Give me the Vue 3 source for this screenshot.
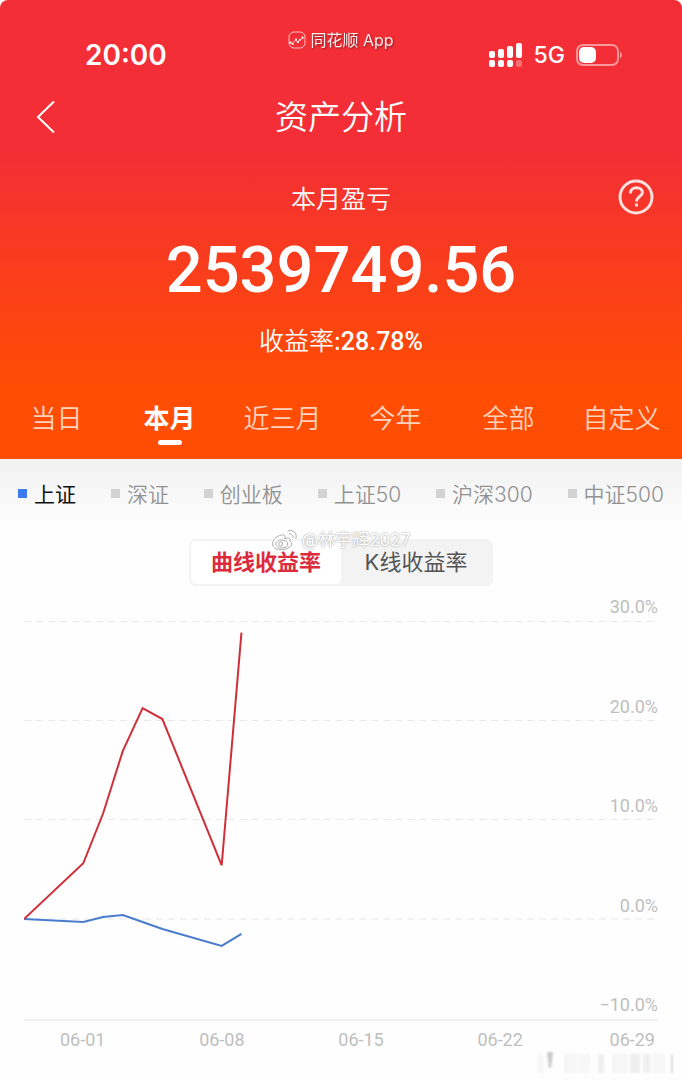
<template>
    <div class="page">
        <header class="hero">
            <div class="status-bar">
                <span class="clock">20:00</span>
                <div class="app-mark">
                    <svg class="app-icon" viewBox="0 0 18 18">
                        <rect x="1" y="1" width="16" height="16" rx="5" />
                        <path d="M1 11.5L4 12.5L8 9L9.500 11L12 8.500L15.500 7" />
                        <path class="dots" d="M1.500 11.500h2M4 13h1.500M7 8.500h2M9 11h2M11 9h1.500M13.500 6.500h2" />
                    </svg>
                    <span>同花顺 App</span>
                </div>
                <div class="status-right">
                    <svg class="signal" viewBox="0 0 34 24">
                        <rect x="0" y="8" width="6" height="7" rx="2" />
                        <rect x="9" y="6" width="6" height="9" rx="2" />
                        <rect x="18" y="3" width="6" height="12" rx="2" />
                        <rect x="27" y="0" width="6" height="15" rx="2" />
                        <rect x="0" y="17" width="6" height="7" rx="2" />
                        <rect x="9" y="17" width="6" height="7" rx="2" />
                        <rect x="18" y="17" width="6" height="7" rx="2" />
                        <rect class="weak" x="27" y="17" width="6" height="7" rx="2" />
                    </svg>
                    <span class="network">5G</span>
                    <svg class="battery" viewBox="0 0 46 22">
                        <rect class="shell" x="1" y="1" width="41" height="20" rx="6" />
                        <rect x="3" y="3" width="17" height="16" rx="5" />
                        <path class="tip" d="M44 7.500Q46 9 46 11T44 14.500Z" />
                    </svg>
                </div>
            </div>

            <nav class="nav-bar">
                <button class="icon-btn" aria-label="返回">
                    <svg class="back-icon" viewBox="0 0 20 34">
                        <path d="M18 1.500L2 17L18 32.500" />
                    </svg>
                </button>
                <h1>资产分析</h1>
            </nav>

            <section class="summary">
                <div class="summary-title">
                    <span>本月盈亏</span>
                    <button class="icon-btn help-btn" aria-label="帮助">
                        <svg class="help-icon" viewBox="0 0 36 36">
                            <circle cx="18" cy="18" r="16" />
                            <path d="M12.500 14.500V13.500C12.500 7 24.500 7 24.500 13.500C24.500 17 18.500 18 18.500 22.500M18.500 24.500V27.500" />
                        </svg>
                    </button>
                </div>
                <strong class="amount">2539749.56</strong>
                <p class="rate">收益率:<b>28.78%</b></p>
            </section>

            <div class="period-tabs">
                <button v-for="p in periods" :key="p" :class="{ active: p === period }" @click="period = p">{{ p }}</button>
            </div>
        </header>

        <main>
            <div class="index-row">
                <button v-for="i in indexes" :key="i" :class="{ active: i === index }" @click="index = i">{{ i }}</button>
            </div>

            <div class="mode-wrap">
                <div class="mode-switch">
                    <button v-for="m in modes" :key="m" :class="{ active: m === mode }" @click="mode = m">{{ m }}</button>
                </div>
                <div class="author-mark">
                    <svg class="weibo-icon" viewBox="0 0 26 22">
                        <path d="M10 6C4 7 0 12 1 16C2 20 8 22 14 20C20 18 22 14 18 12C19 9 17 8 13 10C14 7 13 5 10 6Z" />
                        <ellipse cx="10" cy="15" rx="6" ry="4" />
                        <circle cx="9" cy="15" r="2" />
                        <path d="M16 2C21 0 26 4 24 10M17 5C20 4 22 7 21 9" />
                    </svg>
                    <span>@林宇辉2027</span>
                </div>
            </div>

            <section class="chart">
                <div class="plot">
                    <svg class="lines" viewBox="0 0 635 400" preserveAspectRatio="none">
                        <line v-for="y in gridLines" :key="y" class="grid" x1="0" x2="635" :y1="y" :y2="y" />
                        <line class="axis" x1="0" x2="635" y1="399" y2="399" />
                        <polyline class="index-line" :points="toPoints(indexData)" />
                        <polyline class="profit-line" :points="toPoints(profitData)" />
                    </svg>
                    <ul class="y-labels">
                        <li v-for="l in yLabels" :key="l">{{ l }}</li>
                    </ul>
                </div>
                <div class="x-labels">
                    <span v-for="d in dates" :key="d">{{ d }}</span>
                </div>
            </section>
        </main>

        <svg class="corner-mark" viewBox="0 0 150 32" aria-hidden="true">
            <rect v-for="s in smudges" :key="s[0]" :x="s[0]" y="6" :width="s[1]" height="19" :fill-opacity="s[2]" />
            <path d="M15 4H21L19 20H17Z" fill-opacity="0.400" />
        </svg>
    </div>
</template>

<script setup>
import { ref } from 'vue';

const periods = ['当日', '本月', '近三月', '今年', '全部', '自定义'];
const indexes = ['上证', '深证', '创业板', '上证50', '沪深300', '中证500'];
const modes = ['曲线收益率', 'K线收益率'];
const period = ref('本月');
const index = ref('上证');
const mode = ref('曲线收益率');

const yLabels = ['30.0%', '20.0%', '10.0%', '0.0%', '−10.0%'];
const dates = ['06-01', '06-08', '06-15', '06-22', '06-29'];
const gridLines = [0.5, 99.5, 198.5, 298];

// [day offset from 05-29, percent]
const profitData = [[0, 0], [3, 5.6], [4, 10.6], [5, 16.9], [6, 21.2], [7, 20.1], [10, 5.4], [11, 28.78]];
const indexData = [[0, 0], [3, -0.3], [4, 0.2], [5, 0.4], [6, -0.3], [7, -1], [10, -2.7], [11, -1.5]];

// x, width, opacity
const smudges = [[6, 6, 0.05], [32, 13, 0.06], [46, 12, 0.05], [66, 6, 0.11], [80, 16, 0.06], [98, 10, 0.11], [111, 8, 0.1], [121, 12, 0.06], [139, 2, 0.25]];

const toPoints = (data) => data.map(([day, pct]) => `${day * 19.8},${298 - pct * 9.95}`).join(' ');
</script>

<style>
body {
    margin: 0;
    background: #fefefe;
}
</style>

<style scoped>
.page {
    position: relative;
    min-height: 1080px;
    font-family: "Noto Sans CJK SC", sans-serif;
    color: #fff;
}

button {
    padding: 0;
    border: none;
    background: none;
    color: inherit;
    font: inherit;
    cursor: pointer;
}

svg {
    display: block;
    fill: none;
}

.hero {
    padding-top: 28px;
    border-radius: 8px 8px 0 0;
    background: linear-gradient(#f32e36 0, #f32e36 150px, #fc4411 320px, #ff4d04 390px);
}

.status-bar {
    display: grid;
    grid-template-columns: 1fr auto 1fr;
    height: 54px;
    padding: 0 60px;
}

.clock {
    align-self: center;
    padding-left: 25px;
    font: 600 28px/34px Inter, sans-serif;
}

.app-mark {
    display: flex;
    align-items: center;
    gap: 4px;
    height: 24px;
    font-family: Inter, "Noto Sans CJK SC", sans-serif;
    font-size: 16px;
    line-height: 24px;
    text-shadow: 1px 1px 2px rgba(0, 0, 0, 0.5);
    opacity: 0.9;
}

.app-icon {
    width: 18px;
    height: 18px;
    stroke: #ffd5cf;
}

.app-icon .dots {
    stroke: #fff;
    stroke-width: 2;
}

.status-right {
    display: flex;
    align-items: center;
    justify-content: flex-end;
    gap: 11px;
}

.signal {
    width: 34px;
    height: 24px;
    fill: #fff;
}

.signal .weak {
    opacity: 0.3;
}

.network {
    font: 500 23px/30px Inter, sans-serif;
}

.battery {
    width: 46px;
    height: 22px;
    fill: #fff;
}

.battery .shell {
    fill: none;
    stroke: rgba(255, 255, 255, 0.5);
    stroke-width: 2;
}

.battery .tip {
    opacity: 0.5;
}

.nav-bar {
    display: grid;
    grid-template-columns: 1fr auto 1fr;
    align-items: center;
    height: 70px;
    padding: 0 36px;
}

.back-icon {
    width: 20px;
    height: 34px;
    stroke: #fff;
    stroke-width: 2;
}

h1 {
    margin: 0;
    padding-bottom: 4px;
    font-size: 33px;
    font-weight: 350;
    line-height: 48px;
}

.summary {
    text-align: center;
}

.summary-title {
    display: grid;
    grid-template-columns: 1fr auto 1fr;
    align-items: center;
    height: 90px;
    padding: 0 28px;
    font-size: 25px;
    font-weight: 350;
}

.summary-title span {
    grid-column: 2;
}

.help-btn {
    justify-self: end;
}

.help-icon {
    width: 36px;
    height: 36px;
    stroke: #ffe0dc;
    stroke-width: 3;
}

.amount {
    display: block;
    font-family: Roboto, sans-serif;
    font-size: 65px;
    font-weight: 500;
    line-height: 56px;
}

.rate {
    display: flex;
    align-items: baseline;
    justify-content: center;
    height: 36px;
    margin: 0;
    padding-top: 23px;
    font-size: 25px;
    font-weight: 350;
    line-height: 36px;
}

.rate b {
    font-family: Roboto, sans-serif;
    font-weight: 500;
}

.period-tabs {
    display: grid;
    grid-template-columns: repeat(6, 1fr);
    height: 59px;
    padding: 43px 4px 0 0;
}

.period-tabs button {
    display: flex;
    flex-direction: column;
    align-items: center;
    font-size: 26px;
    font-weight: 350;
    line-height: 34px;
    color: #ffd2bd;
}

.period-tabs .active {
    color: #fff;
    font-weight: 700;
}

.period-tabs .active::after {
    content: "";
    width: 24px;
    height: 5px;
    margin-top: 6px;
    border-radius: 3px;
    background: #fff;
}

.index-row {
    display: flex;
    align-items: center;
    justify-content: space-between;
    height: 68px;
    padding: 0 18px;
    font-family: Inter, "Noto Sans CJK SC", sans-serif;
    background: linear-gradient(#f1f1f1, #fefefe);
}

.index-row button {
    display: flex;
    align-items: center;
    gap: 7px;
    font-size: 21px;
    font-weight: 350;
    color: #929292;
}

.index-row button::before {
    content: "";
    width: 9px;
    height: 9px;
    background: #d3d3d3;
}

.index-row .active {
    color: #111;
    font-weight: 400;
}

.index-row .active::before {
    background: #3d7bf0;
}

.mode-wrap {
    position: relative;
    display: flex;
    justify-content: center;
    padding-top: 12px;
}

.mode-switch {
    display: grid;
    grid-template-columns: 1fr 1fr;
    width: 300px;
    padding: 2px;
    border-radius: 7px;
    background: #f3f3f3;
}

.mode-switch button {
    height: 43px;
    padding-bottom: 2px;
    border-radius: 5px;
    font-family: Inter, "Noto Sans CJK SC", sans-serif;
    font-size: 22px;
    line-height: 26px;
    color: #555;
}

.mode-switch .active {
    background: #fff;
    color: #dc2b3d;
    font-weight: 700;
}

.author-mark {
    position: absolute;
    top: 2px;
    left: 50%;
    display: flex;
    align-items: center;
    gap: 4px;
    transform: translateX(-50%);
    font-family: Inter, "Noto Sans CJK SC", sans-serif;
    font-size: 17px;
    line-height: 22px;
    white-space: nowrap;
    text-shadow: 0 0 2px #888;
}

.weibo-icon {
    width: 26px;
    height: 22px;
    fill: #fff;
    stroke: #aaa;
}

.chart {
    padding: 11px 24px 0;
    font: 18px/20px Roboto, sans-serif;
    color: #bfbfbf;
}

.plot {
    display: grid;
}

.lines,
.y-labels {
    grid-area: 1 / 1;
}

.lines {
    width: 100%;
    height: 400px;
    margin-top: 24px;
}

.grid {
    stroke: #e8e8e8;
    stroke-dasharray: 7 5;
}

.axis {
    stroke: #f0f0f0;
    stroke-width: 2;
}

.index-line {
    stroke: #4a7ccd;
    stroke-width: 2;
}

.profit-line {
    stroke: #cf2f38;
    stroke-width: 2;
}

.y-labels {
    display: flex;
    flex-direction: column;
    justify-content: space-between;
    height: 418px;
    margin: 0;
    padding: 0;
    list-style: none;
    text-align: right;
}

.x-labels {
    display: grid;
    grid-template-columns: 139fr 139fr 139fr 132fr auto;
    padding: 9px 3px 0 36px;
}

.corner-mark {
    position: absolute;
    right: 0;
    bottom: 0;
    width: 150px;
    height: 32px;
    fill: #777;
    filter: blur(1px);
}
</style>
